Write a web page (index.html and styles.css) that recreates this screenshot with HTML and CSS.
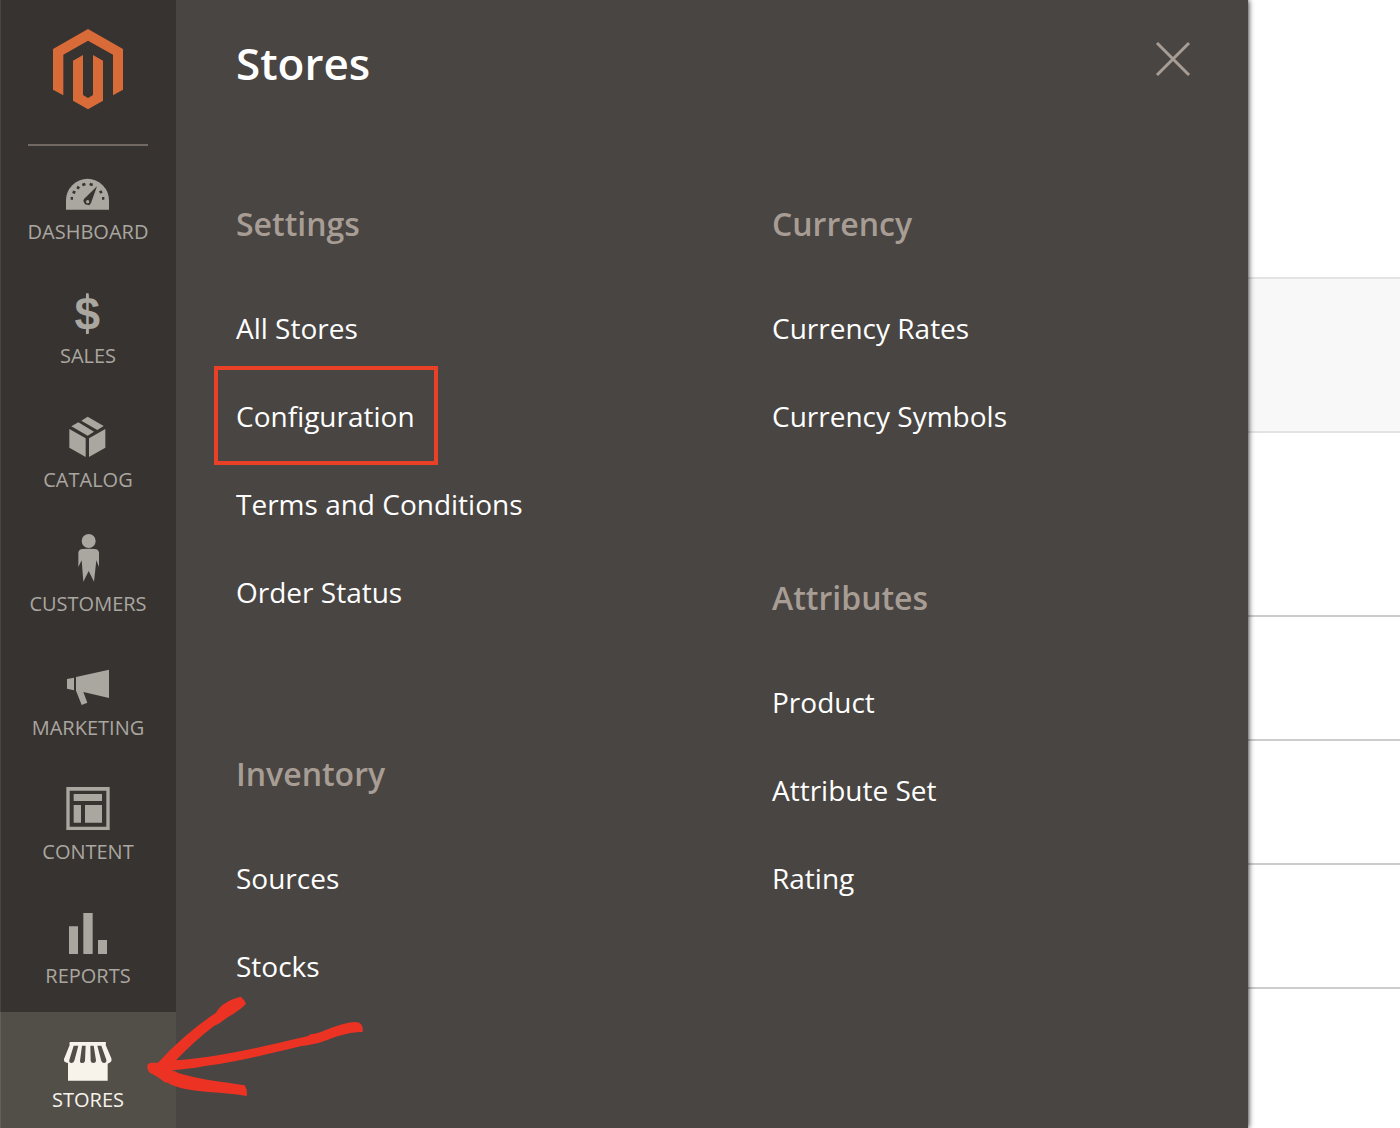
FILE: index.html
```html
<!DOCTYPE html>
<html lang="en">
<head>
  <meta charset="UTF-8">
  <meta name="viewport" content="width=device-width, initial-scale=1">
  <title>Stores / Magento Admin</title>
  <link rel="stylesheet" href="styles.css">
</head>
<body>

<div class="admin">

  <nav class="menu">
    <a class="logo" href="#" aria-label="Magento Admin">
      <svg viewBox="150 80 228 252" width="76" height="84">
        <path d="M264 86 369 146V268L339 285V163L264 121 190 163V285L159 268V146Z"/>
        <path d="M219 181 249 164V284L264 293 279 284V164L309 181V301L264 327 219 301Z"/>
      </svg>
    </a>
    <ul class="menu-list">
      <li class="menu-item">
        <a href="#">
          <svg viewBox="168 480 192 168">
            <path d="M198 629V601A64.500 64.500 0 0 1 327 601V629Z"/>
            <path class="cut-line" d="M212 595H219M218 575 226 578M231 561 238 565M247 555 256 552M269 552 278 555M299 578 306 574M306 595H313"/>
            <path class="cut" d="M291 559 273 609 268 616 255 613 250 603 252 597Z"/>
            <circle cx="263" cy="605" r="5"/>
          </svg>
          <span>Dashboard</span>
        </a>
      </li>
      <li class="menu-item">
        <a href="#">
          <svg viewBox="168 42 192 168">
            <text class="dollar" x="262" y="180">$</text>
            <path d="M258 70H266V84H258ZM258 176H266V192H258Z"/>
          </svg>
          <span>Sales</span>
        </a>
      </li>
      <li class="menu-item">
        <a href="#">
          <svg viewBox="168 414 192 168">
            <path d="M263 440 311 468 292 480 244 452ZM235 457 282 485 263 497 214 469ZM208 477 257 505V561L208 533ZM316 477 267 505V561L316 533Z"/>
          </svg>
          <span>Catalog</span>
        </a>
      </li>
      <li class="menu-item">
        <a href="#">
          <svg viewBox="168 36 192 168">
            <circle cx="266" cy="63" r="21"/>
            <path d="M248 87Q266 85 284 87 296 88 297 98V141L289 121 282 185 266 153 250 185 245 121 235 141V98Q236 88 248 87Z"/>
          </svg>
          <span>Customers</span>
        </a>
      </li>
      <li class="menu-item">
        <a href="#">
          <svg viewBox="168 408 192 168">
            <path d="M201 477 222 473V511L201 506ZM228 471 327 449V534L250 516 262 548 245 555 228 512Z"/>
          </svg>
          <span>Marketing</span>
        </a>
      </li>
      <li class="menu-item">
        <a href="#">
          <svg viewBox="168 30 192 168">
            <path fill-rule="evenodd" d="M199 51H329V180H199ZM209 62V170H319V62Z"/>
            <path d="M221 72H306V93H221ZM221 105H243V158H221ZM255 105H306V158H255Z"/>
          </svg>
          <span>Content</span>
        </a>
      </li>
      <li class="menu-item">
        <a href="#">
          <svg viewBox="168 402 192 168">
            <path d="M207 469H234V552H207ZM250 429H278V552H250ZM294 510H321V552H294Z"/>
          </svg>
          <span>Reports</span>
        </a>
      </li>
      <li class="menu-item active">
        <a href="#">
          <svg viewBox="168 114 192 168">
            <path d="M210 156H317Q319 157 317 165L334 205Q337 216 327 219L323 221V272H204V219Q190 218 192 207L209 165Q207 157 210 156Z"/>
            <path class="cut" d="M221 167H235L223 212Q221 219 214 219 206 218 208 210ZM246 167H257L255 212Q254 219 248 219 239 219 240 212ZM271 167H281L288 211Q288 219 280 219 273 219 272 212ZM292 167H304L319 209Q321 218 312 219 306 219 304 213Z"/>
          </svg>
          <span>Stores</span>
        </a>
        <svg class="arrow" viewBox="420 0 690 330" aria-hidden="true">
          <path d="M442 226Q445 218 456 218H474Q555 130 648 68C662 45 680 32 722 20Q732 27 738 41C718 62 698 72 680 84 665 95 655 103 643 107Q580 155 528 211C665 200 780 172 925 138 930 131 940 133 950 130 990 117 1025 98 1065 96 1083 96 1090 108 1088 126 1060 126 1030 132 995 145 965 158 940 164 905 168 800 192 710 217 615 228 585 235 550 237 515 241 580 269 650 272 734 286Q743 299 740 318C665 304 570 310 508 282Q506 277 497 278C485 271 475 260 450 249Q441 242 442 226Z"/>
        </svg>
      </li>
    </ul>
  </nav>

  <section class="submenu">
    <header class="submenu-header">
      <h1>Stores</h1>
      <button class="close" type="button" aria-label="Close">
        <svg viewBox="0 0 36 36" width="36" height="36"><path d="M2 2 34 34M34 2 2 34"/></svg>
      </button>
    </header>

    <div class="columns">
      <div class="column">
        <div class="group">
          <h2>Settings</h2>
          <ul>
            <li><a href="#">All Stores</a></li>
            <li><a class="highlight" href="#">Configuration</a></li>
            <li><a href="#">Terms and Conditions</a></li>
            <li><a href="#">Order Status</a></li>
          </ul>
        </div>
        <div class="group">
          <h2>Inventory</h2>
          <ul>
            <li><a href="#">Sources</a></li>
            <li><a href="#">Stocks</a></li>
          </ul>
        </div>
      </div>
      <div class="column">
        <div class="group">
          <h2>Currency</h2>
          <ul>
            <li><a href="#">Currency Rates</a></li>
            <li><a href="#">Currency Symbols</a></li>
          </ul>
        </div>
        <div class="group">
          <h2>Attributes</h2>
          <ul>
            <li><a href="#">Product</a></li>
            <li><a href="#">Attribute Set</a></li>
            <li><a href="#">Rating</a></li>
          </ul>
        </div>
      </div>
    </div>
  </section>

  <!-- part of the page left uncovered by the open submenu -->
  <main class="page">
    <div class="page-top"></div>
    <div class="page-actions"></div>
    <div class="page-row page-row-first"></div>
    <div class="page-row"></div>
    <div class="page-row"></div>
    <div class="page-row"></div>
  </main>

</div>

</body>
</html>
```

FILE: styles.css
```css
* {
  box-sizing: border-box;
}
body {
  margin: 0;
  background: #fff;
  font-family: "Open Sans", "Noto Sans", sans-serif;
}
ul {
  list-style: none;
  margin: 0;
  padding: 0;
}
a {
  color: inherit;
  text-decoration: none;
}
h1, h2 {
  margin: 0;
  font-weight: 600;
}
.admin {
  display: flex;
  height: 100vh;
  overflow: hidden;
}

/* left menu */
.menu {
  flex: 0 0 176px;
  position: relative;
  z-index: 2;
  background: #373330;
  color: #aaa6a0;
  box-shadow: inset 1px 0 #4a4542;
}
.logo {
  display: flex;
  justify-content: center;
  height: 144px;
  padding-top: 27px;
}
.logo svg {
  fill: #d96b38;
}
.menu-list::before {
  content: "";
  display: block;
  height: 2px;
  margin: 0 28px -2px;
  background: #736963;
}
.menu-item {
  position: relative;
  height: 124px;
}
.menu-item a {
  display: flex;
  flex-direction: column;
  align-items: center;
  padding-top: 16px;
  font-size: 20px;
  line-height: 32px;
  text-transform: uppercase;
}
.menu-item a svg {
  width: 64px;
  height: 56px;
  fill: currentColor;
}
.menu-item a .cut {
  fill: #373330;
}
.cut-line {
  stroke: #373330;
  stroke-width: 8;
}
.dollar {
  font: bold 138px "Liberation Sans", Arial, sans-serif;
  text-anchor: middle;
}
.menu-item.active {
  background: #524f49;
  color: #f7f3eb;
  box-shadow: inset 1px 0 #625e59;
}
.menu-item.active .cut {
  fill: #524f49;
}
.arrow {
  position: absolute;
  left: 140px;
  top: -22px;
  width: 230px;
  height: 110px;
  fill: #ec3323;
  pointer-events: none;
}

/* open submenu */
.submenu {
  flex: 0 1 1072px;
  position: relative;
  z-index: 1;
  background: #494542;
  color: #fff;
  box-shadow: 0 0 6px #000;
}
.submenu-header {
  display: flex;
  justify-content: space-between;
  align-items: flex-start;
  height: 202px;
  padding: 33px 57px 0 60px;
}
.submenu-header h1 {
  font-size: 44px;
  line-height: 60px;
}
.close {
  margin-top: 8px;
  padding: 0;
  border: none;
  background: none;
  cursor: pointer;
}
.close svg {
  display: block;
  fill: none;
  stroke: #a79d95;
  stroke-width: 3;
}
.columns {
  display: grid;
  grid-template-columns: 1fr 1fr;
}
.column {
  padding-left: 60px;
}
.group {
  margin-bottom: 116px;
}
.group h2 {
  margin-bottom: 38px;
  color: #a79d95;
  font-size: 32px;
  line-height: 44px;
}
.group li {
  line-height: 88px;
  font-size: 28px;
}
.group a {
  display: inline-block;
  vertical-align: top;
}
.highlight {
  position: relative;
}
.highlight::after {
  content: "";
  position: absolute;
  inset: -6px -23px -5px -22px;
  border: 4px solid #ea4025;
}

/* page behind */
.page {
  flex: 1;
}
.page-top {
  height: 277px;
}
.page-actions {
  height: 156px;
  background: #f8f8f8;
  border: solid #e3e3e3;
  border-width: 2px 0;
}
.page-row {
  height: 124px;
  border-bottom: 2px solid #ccc;
}
.page-row-first {
  height: 184px;
}
```
